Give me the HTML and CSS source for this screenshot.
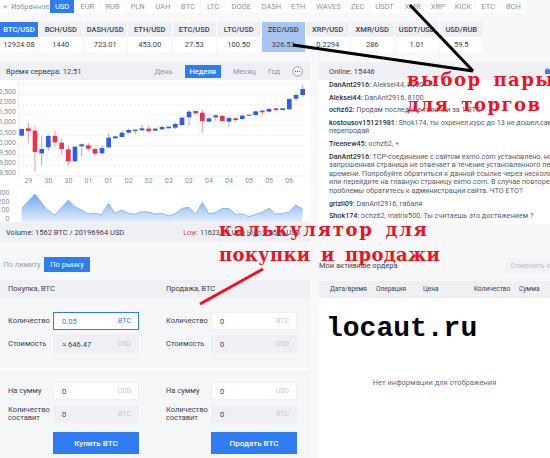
FILE: index.html

```html
<!DOCTYPE html>
<html lang="ru">
<head>
  <meta charset="UTF-8" />
  <meta name="viewport" content="width=device-width, initial-scale=1.0"/>
  <title>Биржа BTC/USD</title>
  <link rel="stylesheet" href="styles.css">
</head>
<body>
<div class="page">

  <div class="tabs">
    <div class="tab fav"><span class="star">★</span>Избранное</div>
    <div class="tab active">USD</div>
    <div class="tab">EUR</div>
    <div class="tab">RUB</div>
    <div class="tab">PLN</div>
    <div class="tab">UAH</div>
    <div class="tab">BTC</div>
    <div class="tab">LTC</div>
    <div class="tab wide">DOGE</div>
    <div class="tab mid">DASH</div>
    <div class="tab">ETH</div>
    <div class="tab wider">WAVES</div>
    <div class="tab narrow">ZEC</div>
    <div class="tab wide">USDT</div>
    <div class="tab">XMR</div>
    <div class="tab">XRP</div>
    <div class="tab">KICK</div>
    <div class="tab">ETC</div>
    <div class="tab">BCH</div>
  </div>

  <div class="pairs">
    <div class="pair first active"><div class="pair-name">BTC/USD</div><div class="pair-val">12924.08</div></div>
    <div class="pair"><div class="pair-name">BCH/USD</div><div class="pair-val">1440</div></div>
    <div class="pair"><div class="pair-name">DASH/USD</div><div class="pair-val">723.01</div></div>
    <div class="pair"><div class="pair-name">ETH/USD</div><div class="pair-val">453.00</div></div>
    <div class="pair"><div class="pair-name">ETC/USD</div><div class="pair-val">27.53</div></div>
    <div class="pair"><div class="pair-name">LTC/USD</div><div class="pair-val">100.50</div></div>
    <div class="pair hover"><div class="pair-name">ZEC/USD</div><div class="pair-val">326.53</div></div>
    <div class="pair"><div class="pair-name">XRP/USD</div><div class="pair-val">0.2294</div></div>
    <div class="pair"><div class="pair-name">XMR/USD</div><div class="pair-val">286</div></div>
    <div class="pair"><div class="pair-name">USDT/USD</div><div class="pair-val">1.01</div></div>
    <div class="pair"><div class="pair-name">USD/RUB</div><div class="pair-val">59.5</div></div>
  </div>

  <div class="main">
    <div class="left">
      <div class="panel-head chart-head">
        <span class="server-time">Время сервера: 12:51</span>
        <div class="periods">
          <span class="period">День</span>
          <span class="period active">Неделя</span>
          <span class="period">Месяц</span>
          <span class="period">Год</span>
          <svg class="more" width="11" height="11" viewBox="0 0 11 11">
            <circle cx="5.5" cy="5.5" r="4.8" fill="#f4f5f7" stroke="#8a8f99" stroke-width="0.8"/>
            <path d="M3 5.5h1M5 5.5h1M7 5.5h1" stroke="#666" stroke-width="1"/>
          </svg>
        </div>
      </div>
      <div class="chart">
        <svg id="chart" width="310" height="142" viewBox="0 0 930 426"></svg>
      </div>
      <div class="volume">
        <span>Volume: 1562 BTC / 20196964 USD</span>
        <span class="range"><span class="low">Low:</span> 11623.84 USD <span class="high">High:</span> 12500 USD</span>
      </div>

      <div class="order-type">
        <span class="type">По лимиту</span>
        <span class="type active">По рынку</span>
      </div>

      <div class="trade">
        <div class="trade-head">
          <span>Покупка, BTC</span>
          <span>Продажа, BTC</span>
        </div>
        <div class="trade-row top">
          <div class="trade-col">
            <div class="field-row"><label>Количество</label><div class="field focus"><span>0.05</span><em>BTC</em></div></div>
            <div class="field-row"><label>Стоимость</label><div class="field off"><span>≈ 646.47</span><em>USD</em></div></div>
          </div>
          <div class="trade-col">
            <div class="field-row"><label>Количество</label><div class="field"><span>0</span><em>BTC</em></div></div>
            <div class="field-row"><label>Стоимость</label><div class="field off"><span>0</span><em>USD</em></div></div>
          </div>
        </div>
        <div class="trade-row bottom">
          <div class="trade-col">
            <div class="field-row"><label>На сумму</label><div class="field"><span>0</span><em>USD</em></div></div>
            <div class="field-row"><label>Количество<br>составит</label><div class="field off"><span>0</span><em>BTC</em></div></div>
            <button class="trade-btn">Купить BTC</button>
          </div>
          <div class="trade-col">
            <div class="field-row"><label>На сумму</label><div class="field"><span>0</span><em>USD</em></div></div>
            <div class="field-row"><label>Количество<br>составит</label><div class="field off"><span>0</span><em>BTC</em></div></div>
            <button class="trade-btn">Продать BTC</button>
          </div>
        </div>
      </div>
    </div>

    <div class="right">
      <div class="panel-head chat-head">
        <span>Online: 15446</span>
        <svg class="chat-icon" width="5" height="6" viewBox="0 0 5 6"><path d="M0 6V3a2.5 2.5 0 0 1 5 0v3z" fill="#3b7ff0"/></svg>
      </div>
      <div class="chat">
        <p><b>DanAnt2916:</b> Aleksei44, 8000</p>
        <p><b>Aleksei44:</b> DanAnt2916, 8100</p>
        <p><b>ochz62:</b> Продам последние тапочки за 1 BTC</p>
        <p><b>kostousov15121981:</b> Shok174, ты охренел,курс до 13 не дошел,сам себе<br>перепродай</p>
        <p><b>Treenew45:</b> ochz62, +</p>
        <p><b>DanAnt2916:</b> TCP-соединение с сайтом exmo.com установлено, но<br>запрошенная страница не отвечает в течение установленного периода<br>времени. Попробуйте обратиться к данной ссылке через несколько мин<br>или перейдите на главную страницу exmo.com. В случае повторения<br>проблемы обратитесь к администрации сайта. ЧТО ЕТО?</p>
        <p><b>grizli09:</b> DanAnt2916, габаля</p>
        <p><b>Shok174:</b> ochz62, matrix500, Ты считаешь это достяжением ?</p>
      </div>

      <div class="orders-title">
        <span>Мои активные ордера</span>
        <span class="cancel">Отменить ор</span>
      </div>
      <div class="orders-head">
        <span>Дата/время</span>
        <span>Операция</span>
        <span>Цена</span>
        <span>Количество</span>
        <span>Сумма</span>
      </div>
      <div class="orders-body">Нет информации для отображения</div>
    </div>
  </div>

  <!-- пометки поверх скриншота -->
  <svg class="marks" width="550" height="458" viewBox="0 0 550 458">
    <path d="M473 71L410 5M473 71L293 45" stroke="#000" stroke-width="3" fill="none"/>
    <path d="M200 304L263 269" stroke="#f01020" stroke-width="3" fill="none"/>
  </svg>
  <div class="note n1">выбор пары<br>для торгов</div>
  <div class="note n2"><span class="loose">калькулятор для</span><br><span class="tight">покупки и продажи</span></div>
  <div class="site">locaut.ru</div>
</div>

<script src="chart.js"></script>
</body>
</html>
```

FILE: styles.css

```css
* {
  box-sizing: border-box;
}
body {
  margin: 0;
  background: #f8f8fa;
  font-family: Roboto, "Liberation Sans", sans-serif;
  font-size: 7.5px;
  color: #3c4250;
}
.page {
  position: relative;
  width: 550px;
  height: 458px;
  overflow: hidden;
}

/* currency tabs */
.tabs {
  display: flex;
  gap: 1px;
  height: 13px;
}
.tab {
  width: 24.2px;
  line-height: 13px;
  text-align: center;
  background: #fff;
  color: #8b93a3;
  white-space: nowrap;
}
.tab.narrow {
  width: 22px;
}
.tab.mid {
  width: 28px;
}
.tab.wide {
  width: 30px;
}
.tab.wider {
  width: 34px;
}
.tab.fav {
  width: 49px;
  text-align: left;
  overflow: hidden;
}
.star {
  color: #b9bec8;
  font-size: 7px;
  margin: 0 3px 0 2px;
}
.tab.active {
  background: #2f7bf2;
  color: #fff;
}

/* pairs */
.pairs {
  display: flex;
  margin-top: 9px;
}
.pair {
  width: 44.5px;
  text-align: center;
}
.pair.first {
  width: 39px;
}
.pair-name {
  height: 15px;
  line-height: 15px;
  background: #eef0f4;
  border-right: 1px solid #fff;
  font-weight: 500;
}
.pair-val {
  height: 15px;
  line-height: 15px;
  background: #fff;
  border-right: 1px solid #f3f4f6;
}
.pair.active .pair-name {
  background: #2f7bf2;
  color: #fff;
}
.pair.hover .pair-name,
.pair.hover .pair-val {
  background: #a9c6f0;
}

/* main columns */
.main {
  display: flex;
  gap: 9px;
  margin-top: 10px;
}
.left {
  width: 310px;
}
.right {
  width: 231px;
  flex: 1;
}
.panel-head {
  display: flex;
  align-items: center;
  justify-content: space-between;
  height: 18px;
  background: #eef0f4;
}

/* chart */
.chart-head {
  padding: 0 7px 0 6px;
}
.periods {
  display: flex;
  align-items: center;
}
.period {
  color: #8b93a3;
  margin-left: 12px;
  line-height: 13px;
}
.period.active {
  background: #2f7bf2;
  color: #fff;
  padding: 0 5px;
  font-weight: 500;
}
.more {
  margin-left: 12px;
}
.chart {
  height: 142px;
  background: #fff;
}
.chart svg {
  display: block;
}
.axis {
  font-size: 21px;
  fill: #8a8f99;
  font-family: Roboto, "Liberation Sans", sans-serif;
}
.volume {
  display: flex;
  justify-content: space-between;
  align-items: center;
  height: 20px;
  padding: 0 10px 0 6px;
  background: #eef0f4;
}
.range {
  font-size: 7.1px;
}
.low {
  color: #f0384a;
}
.high {
  color: #2f7bf2;
}

/* buy and sell form */
.order-type {
  display: flex;
  height: 15px;
  margin-top: 15px;
}
.type {
  width: 44px;
  line-height: 15px;
  text-align: center;
  color: #9aa0ac;
  background: #f4f5f7;
}
.type.active {
  width: 46px;
  background: #2f7bf2;
  color: #fff;
}
.trade {
  margin-top: 8px;
  background: #f5f6f8;
  height: 177px;
}
.trade-head,
.trade-row {
  display: grid;
  grid-template-columns: 158px 1fr;
  padding-left: 8px;
}
.trade-head {
  height: 18px;
  line-height: 18px;
  background: #eef0f4;
}
.trade-row.top {
  height: 72px;
  padding-top: 14px;
  border-bottom: 2px solid #fff;
}
.trade-row.bottom {
  padding-top: 12px;
}
.field-row {
  display: flex;
  align-items: center;
  margin-bottom: 5px;
}
.field-row label {
  width: 45px;
  line-height: 8px;
}
.field {
  display: flex;
  justify-content: space-between;
  align-items: center;
  width: 86px;
  height: 18px;
  padding: 0 7px 0 8px;
  background: #fff;
  border: 1px solid #eef0f4;
}
.field em {
  font-style: normal;
  font-size: 7px;
  color: #c5c9d2;
}
.field.off {
  background: #eef0f4;
}
.field.focus {
  border-color: #2f7bf2;
  color: #2f7bf2;
}
.field.focus em {
  color: #2f7bf2;
}
.trade-btn {
  display: block;
  width: 86px;
  height: 22px;
  margin: 9px 0 0 45px;
  border: none;
  background: #2f7bf2;
  color: #fff;
  font-family: inherit;
  font-size: 8px;
  font-weight: 500;
}

/* chat */
.chat-head {
  padding: 0 0 0 10px;
}
.chat {
  height: 144px;
  padding: 1px 0 0 10px;
  background: #fff;
  overflow: hidden;
  white-space: nowrap;
  font-size: 7.2px;
  line-height: 8.6px;
  color: #555b68;
}
.chat p {
  margin: 0 0 4px 0;
}
.chat b {
  color: #2a2f3a;
  font-weight: 500;
}

/* orders */
.orders-title {
  display: flex;
  justify-content: space-between;
  align-items: center;
  height: 15px;
  margin-top: 34px;
  white-space: nowrap;
}
.cancel {
  width: 45px;
  line-height: 15px;
  padding-left: 5px;
  overflow: hidden;
  background: #f1f2f5;
  color: #c0c4cc;
}
.orders-head {
  display: grid;
  grid-template-columns: 46px 47px 51px 45px 1fr;
  height: 17px;
  line-height: 17px;
  margin-top: 8px;
  padding-left: 11px;
  background: #eef0f4;
  font-size: 6.5px;
}
.orders-body {
  height: 160px;
  padding-top: 80px;
  text-align: center;
  background: #fff;
  font-size: 7.5px;
  color: #666c78;
}

/* annotations over the picture */
.marks {
  position: absolute;
  left: 0;
  top: 0;
}
.note {
  position: absolute;
  font-family: "DejaVu Serif", serif;
  font-weight: bold;
  font-size: 18px;
  line-height: 25px;
  letter-spacing: 1.5px;
  word-spacing: 4px;
  color: #f01020;
  white-space: nowrap;
}
.loose {
  letter-spacing: 1.7px;
}
.tight {
  letter-spacing: 0.3px;
}
.n1 {
  left: 407px;
  top: 67px;
}
.n2 {
  left: 219px;
  top: 217px;
}
.site {
  position: absolute;
  left: 326px;
  top: 313px;
  font-family: "Liberation Mono", monospace;
  font-weight: bold;
  font-size: 28px;
  color: #000;
}
```

FILE: chart.js

```js
// x, body top, body bottom, wick top, wick bottom, up?
const candles = [
  [65,147,167,145,170,1],[85,145,153,128,190,0],[105,152,216,138,275,0],[125,207,220,167,256,1],
  [145,168,202,165,213,1],[165,168,187,152,200,0],[185,188,207,175,225,0],[205,208,244,198,257,0],
  [225,200,244,200,244,1],[245,193,199,190,230,1],[265,196,206,188,215,0],[285,207,221,203,227,0],
  [306,204,220,197,224,1],[326,173,202,162,205,1],[346,169,175,169,175,1],[366,158,171,152,172,1],
  [386,150,158,146,160,1],[406,149,153,149,162,1],[426,145,151,135,153,1],[446,146,153,138,160,0],
  [466,146,152,143,153,1],[486,141,148,138,150,1],[506,140,145,140,145,1],[526,132,143,128,147,1],
  [546,113,135,110,137,1],[567,95,112,90,137,1],[587,93,100,91,103,0],[607,98,123,90,158,0],
  [627,115,125,110,127,1],[647,106,112,104,122,1],[667,108,123,105,126,0],[687,114,125,110,141,1],
  [707,115,120,113,127,0],[727,107,117,104,119,1],[747,104,107,104,107,1],[767,94,105,92,107,1],
  [787,92,97,90,104,0],[807,87,95,84,97,1],[828,85,90,83,96,0],[848,85,90,85,90,1],
  [868,57,88,55,90,1],[888,45,56,40,62,1],[908,27,45,15,50,1]
];
const volume = [
  [65,85],[105,42],[140,88],[165,105],[205,60],[225,80],[245,90],[265,102],[285,100],[305,105],
  [325,70],[345,100],[365,90],[385,100],[405,103],[425,95],[445,96],[465,102],[487,100],[507,108],
  [527,100],[547,85],[567,82],[587,103],[607,67],[627,102],[647,97],[667,85],[687,86],[707,103],
  [727,102],[747,110],[767,103],[787,97],[807,85],[827,102],[847,101],[867,96],[887,75],[908,87]
];
const prices = ['12,500','12,000','11,500','11,000','10,500','10,000','9,500','9,000','8,500'];
const days = ['29','30','30','01','01','02','02','03','03','04','04','05','05','06'];

let svg = '<defs><linearGradient id="vol" x1="0" y1="0" x2="0" y2="1">' +
  '<stop offset="0" stop-color="#6ea6ec"/><stop offset="1" stop-color="#e2edfa"/></linearGradient></defs>';

prices.forEach((p, i) => {
  const y = 14 + i * 30.4;
  svg += `<line x1="55" x2="920" y1="${y}" y2="${y}" stroke="#e6e8ec" stroke-width="3" stroke-dasharray="6 6"/>`;
  svg += `<text class="axis" x="48" y="${y + 28}" text-anchor="end">${p}</text>`;
});
svg += '<line x1="55" x2="55" y1="0" y2="290" stroke="#eceef1" stroke-width="3"/>';
svg += '<line x1="55" x2="920" y1="288" y2="288" stroke="#eceef1" stroke-width="3"/>';
svg += '<line x1="55" x2="920" y1="319" y2="319" stroke="#eceef1" stroke-width="3" stroke-dasharray="6 6"/>';

days.forEach((d, i) => {
  svg += `<text class="axis" x="${85 + i * 60.2}" y="310" text-anchor="middle">${d}</text>`;
});

candles.forEach(([x, top, bottom, high, low, up]) => {
  const color = up ? '#2f5fe8' : '#f0304a';
  svg += `<line x1="${x}" x2="${x}" y1="${high}" y2="${low}" stroke="${color}" stroke-width="2.5" opacity="0.6"/>`;
  svg += `<rect x="${x - 7}" y="${top}" width="14" height="${bottom - top}" fill="${color}"/>`;
});

['300', '200', '100', '0'].forEach((v, i) => {
  svg += `<text class="axis" x="28" y="${345 + i * 26}" text-anchor="end">${v}</text>`;
});
const pts = volume.map(([x, y]) => x + ',' + (y + 300)).join(' ');
svg += `<polygon points="65,425 ${pts} 908,425" fill="url(#vol)"/>`;
svg += `<polyline points="${pts}" fill="none" stroke="#8ab8f0" stroke-width="3"/>`;

document.getElementById('chart').innerHTML = svg;
```
